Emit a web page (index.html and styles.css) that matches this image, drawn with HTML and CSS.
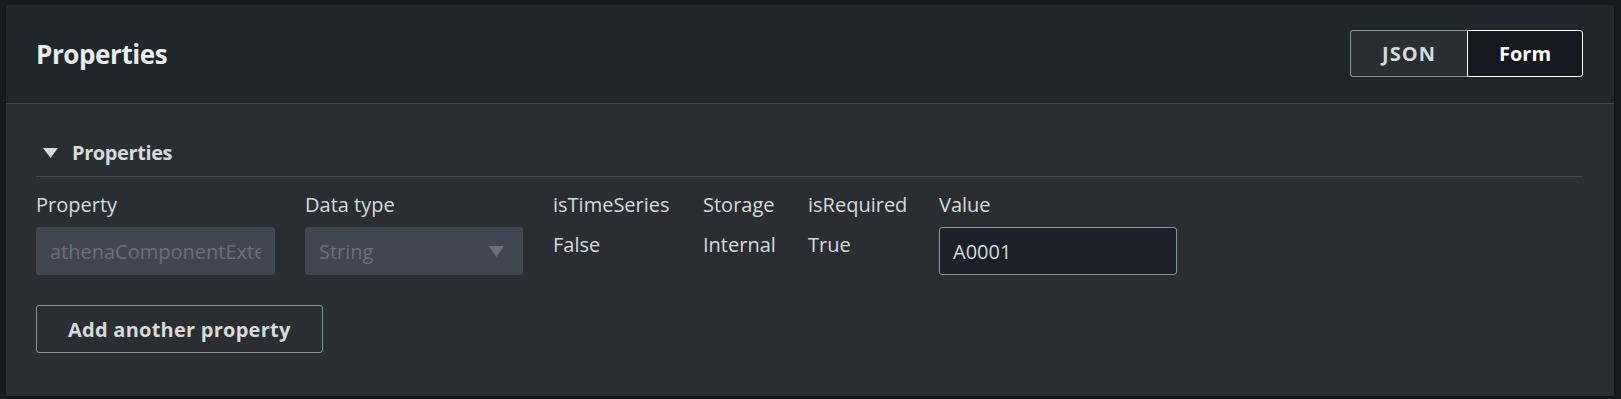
FILE: index.html
```html
<!DOCTYPE html>
<html lang="en">
<head>
  <meta charset="UTF-8">
  <meta name="viewport" content="width=device-width, initial-scale=1.0">
  <title>Properties</title>
  <link rel="stylesheet" href="styles.css">
</head>
<body>
  <div class="container">
    <div class="container-header">
      <h2>Properties</h2>
      <div class="toggle">
        <button type="button" class="toggle-btn json">JSON</button>
        <button type="button" class="toggle-btn selected">Form</button>
      </div>
    </div>

    <div class="container-body">
      <div class="section-title">
        <span class="caret">
          <svg width="15" height="10" viewBox="0 0 15 10"><path d="M0 0 H15 L7.5 10 Z" fill="currentColor"/></svg>
        </span>
        <span>Properties</span>
      </div>

      <div class="fields">
        <div class="field col-property">
          <label for="prop-name">Property</label>
          <input type="text" id="prop-name" class="input disabled" value="athenaComponentExternalId" disabled>
        </div>
        <div class="field col-type">
          <label>Data type</label>
          <div class="select disabled">
            <span>String</span>
            <svg width="15" height="11" viewBox="0 0 15 11"><path d="M0 0 H15 L7.5 11 Z" fill="currentColor"/></svg>
          </div>
        </div>
        <div class="field col-ts">
          <label>isTimeSeries</label>
          <div class="static">False</div>
        </div>
        <div class="field col-storage">
          <label>Storage</label>
          <div class="static">Internal</div>
        </div>
        <div class="field col-req">
          <label>isRequired</label>
          <div class="static">True</div>
        </div>
        <div class="field col-value">
          <label for="prop-value">Value</label>
          <input type="text" id="prop-value" class="input" value="A0001">
        </div>
      </div>

      <button type="button" class="add-btn">Add another property</button>
    </div>
  </div>
</body>
</html>
```

FILE: styles.css
```css
body {
  font-family: "Open Sans", Arial, sans-serif;
  background-color: #161a21;
  margin: 0;
  padding: 5px 7px 4px 6px;
  color: #d5dbdb;
}

.container {
  background: #2a2e33;
  box-shadow: 0 1px 2px rgba(0, 0, 0, 0.4);
}

.container-header {
  background: #21252c;
  border-bottom: 1px solid #414750;
  padding: 25px 31px 26px 30px;
  display: flex;
  justify-content: space-between;
  align-items: center;
}

h2 {
  margin: 0;
  font-size: 26px;
  line-height: 30px;
  font-weight: 700;
  letter-spacing: -0.4px;
  color: #eaeded;
}

.toggle {
  display: flex;
}

.toggle-btn {
  width: 117px;
  height: 47px;
  font-family: inherit;
  font-size: 20px;
  font-weight: 700;
  color: #d5dbdb;
  background: #2a2e33;
  border: 1px solid #879596;
  border-right: none;
  border-radius: 3px 0 0 3px;
  padding: 0;
  cursor: pointer;
}

.toggle-btn.json {
  letter-spacing: 1px;
}

.toggle-btn.selected {
  width: 116px;
  color: #ffffff;
  background: #16191f;
  border: 1px solid #ffffff;
  border-radius: 0 3px 3px 0;
}

.container-body {
  padding: 37px 31px 43px 30px;
}

.section-title {
  display: flex;
  align-items: center;
  font-size: 20px;
  line-height: 24px;
  font-weight: 700;
  letter-spacing: -0.4px;
  padding-bottom: 11px;
  border-bottom: 1px solid #414750;
}

.caret {
  display: flex;
  margin-left: 7px;
  margin-right: 14px;
  color: #d5dbdb;
}

.fields {
  display: flex;
  gap: 30px;
  margin-top: 16px;
}

.field {
  display: flex;
  flex-direction: column;
}

.field label {
  font-size: 20px;
  line-height: 24px;
  margin-bottom: 10px;
}

.col-property { width: 239px; }
.col-type { width: 218px; }
.col-ts { width: 120px; }
.col-storage { width: 75px; }
.col-req { width: 101px; }
.col-value { width: 238px; }

.input {
  box-sizing: border-box;
  width: 100%;
  height: 48px;
  padding: 0 13px;
  font-family: inherit;
  font-size: 20px;
  color: #d5dbdb;
  background: #1b2029;
  border: 1px solid #879596;
  border-radius: 3px;
  outline: none;
}

.input.disabled {
  background: #414750;
  border-color: #414750;
  color: #687078;
}

.select {
  box-sizing: border-box;
  height: 48px;
  padding: 0 19px 0 14px;
  display: flex;
  justify-content: space-between;
  align-items: center;
  font-size: 20px;
  background: #414750;
  border-radius: 3px;
  color: #687078;
}

.static {
  font-size: 20px;
  line-height: 24px;
  padding-top: 6px;
}

.add-btn {
  margin-top: 30px;
  height: 48px;
  padding: 0 31px;
  font-family: inherit;
  font-size: 20px;
  font-weight: 700;
  letter-spacing: 0.25px;
  color: #d5dbdb;
  background: transparent;
  border: 1px solid #879596;
  border-radius: 3px;
  cursor: pointer;
}
```
